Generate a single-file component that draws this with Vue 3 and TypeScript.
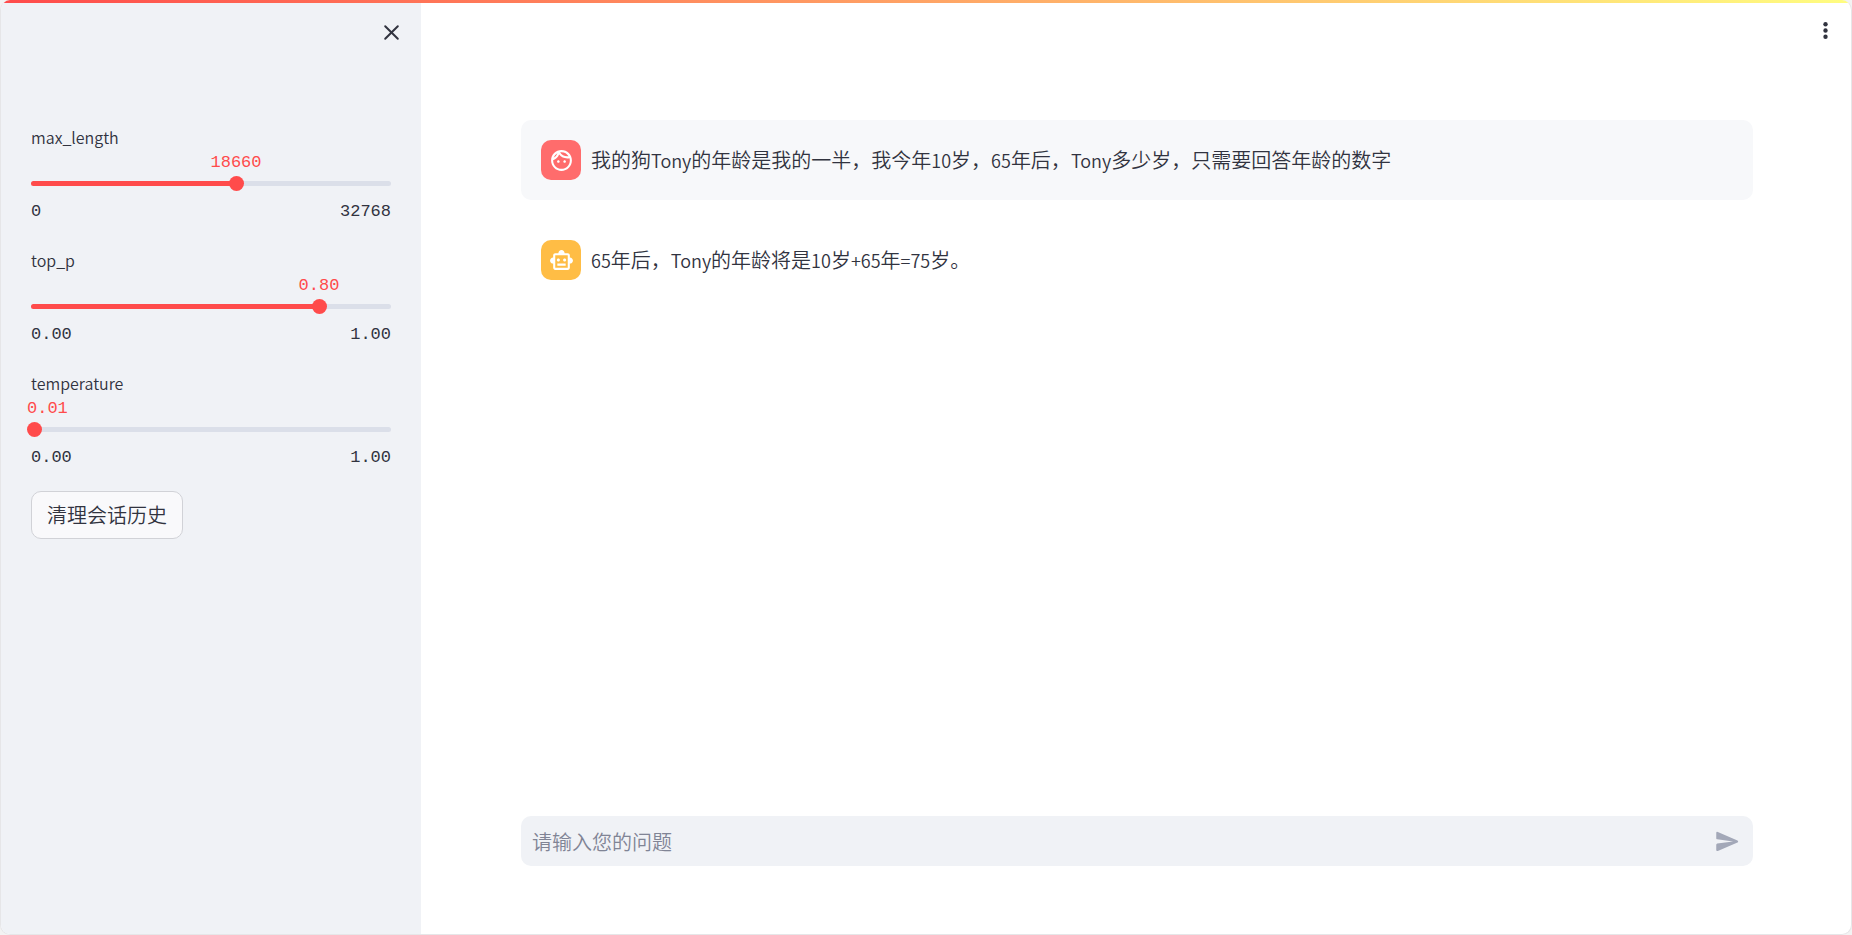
<script setup lang="ts">
import { computed, ref } from 'vue'

interface Setting {
  id: string
  min: number
  max: number
  step: number
  digits: number
  value: number
}

interface Message {
  role: 'user' | 'assistant'
  text: string
}

const settings = ref<Setting[]>([
  { id: 'max_length', min: 0, max: 32768, step: 1, digits: 0, value: 18660 },
  { id: 'top_p', min: 0, max: 1, step: 0.01, digits: 2, value: 0.8 },
  { id: 'temperature', min: 0, max: 1, step: 0.01, digits: 2, value: 0.01 },
])

const messages = ref<Message[]>([
  { role: 'user', text: '我的狗Tony的年龄是我的一半，我今年10岁，65年后，Tony多少岁，只需要回答年龄的数字' },
  { role: 'assistant', text: '65年后，Tony的年龄将是10岁+65年=75岁。' },
])

const sidebarOpen = ref(true)
const draft = ref('')

// Latin runs are set apart so they can be sized to sit evenly beside Chinese text.
const rows = computed(() =>
  messages.value.map((m) => ({
    role: m.role,
    runs: (m.text.match(/[\x20-\x7e]+|[^\x20-\x7e]+/g) ?? []).map((text) => ({
      text,
      latin: /^[\x20-\x7e]/.test(text),
    })),
  })),
)

function sliderVars(s: Setting) {
  return {
    '--pos': `${((s.value - s.min) / (s.max - s.min)) * 100}%`,
    '--chars': s.value.toFixed(s.digits).length,
  }
}

function send() {
  const text = draft.value.trim()
  if (!text) return
  messages.value.push({ role: 'user', text })
  draft.value = ''
}
</script>

<template>
  <div class="app">
    <div class="decoration"></div>

    <aside v-if="sidebarOpen" class="sidebar">
      <header class="sidebar-head">
        <button class="icon-button" type="button" aria-label="Close sidebar" @click="sidebarOpen = false">
          <svg width="25" height="25" viewBox="0 0 25 25" fill="none" stroke="currentColor" stroke-width="2" stroke-linecap="round">
            <path d="M6.2 6.2l12.6 12.6M18.8 6.2L6.2 18.8" />
          </svg>
        </button>
      </header>

      <div class="settings">
        <div v-for="s in settings" :key="s.id" class="setting" :style="sliderVars(s)">
          <label class="setting-label" :for="s.id">{{ s.id }}</label>
          <output class="setting-value" :for="s.id">{{ s.value.toFixed(s.digits) }}</output>
          <div class="slider">
            <div class="track"><div class="fill"></div></div>
            <input :id="s.id" v-model.number="s.value" class="range" type="range" :min="s.min" :max="s.max" :step="s.step" />
          </div>
          <div class="limits">
            <span>{{ s.min.toFixed(s.digits) }}</span>
            <span>{{ s.max.toFixed(s.digits) }}</span>
          </div>
        </div>
        <button class="clear" type="button" @click="messages = []">清理会话历史</button>
      </div>
    </aside>

    <main class="main">
      <header class="toolbar">
        <button class="icon-button" type="button" aria-label="Main menu">
          <svg width="25" height="25" viewBox="0 0 24 24" fill="currentColor">
            <circle cx="12" cy="6" r="2.1" />
            <circle cx="12" cy="12" r="2.1" />
            <circle cx="12" cy="18" r="2.1" />
          </svg>
        </button>
      </header>

      <section class="chat">
        <article v-for="(row, i) in rows" :key="i" class="message" :class="row.role">
          <div class="avatar">
            <svg v-if="row.role === 'user'" width="25" height="25" viewBox="0 0 24 24" fill="currentColor">
              <path d="M10.25 13c0 .69-.56 1.25-1.25 1.25S7.75 13.69 7.75 13 8.31 11.75 9 11.75s1.25.56 1.25 1.25zM15 11.75c-.69 0-1.25.56-1.25 1.25s.56 1.25 1.25 1.25 1.25-.56 1.25-1.25-.56-1.25-1.25-1.25zm7 .25c0 5.52-4.48 10-10 10S2 17.52 2 12 6.48 2 12 2s10 4.48 10 10zM10.66 4.12C12.06 6.44 14.6 8 17.5 8c.46 0 .91-.05 1.34-.12C17.44 5.56 14.9 4 12 4c-.46 0-.91.05-1.34.12zM4.42 9.47a8.046 8.046 0 003.66-4.44 8.046 8.046 0 00-3.66 4.44zM20 12c0-.78-.12-1.53-.33-2.24-.7.15-1.42.24-2.17.24a10 10 0 01-7.76-3.69A10.016 10.016 0 014 11.86c.01.04 0 .09 0 .14 0 4.42 3.58 8 8 8s8-3.58 8-8z" />
            </svg>
            <svg v-else width="25" height="25" viewBox="0 0 24 24" fill="currentColor">
              <path d="M20 9V7c0-1.1-.9-2-2-2h-3c0-1.66-1.34-3-3-3S9 3.34 9 5H6c-1.1 0-2 .9-2 2v2c-1.66 0-3 1.34-3 3s1.34 3 3 3v4c0 1.1.9 2 2 2h12c1.1 0 2-.9 2-2v-4c1.66 0 3-1.34 3-3s-1.34-3-3-3zm-2 10H6V7h12v12zm-9-6c-.83 0-1.5-.67-1.5-1.5S8.17 10 9 10s1.5.67 1.5 1.5S9.83 13 9 13zm7.5-1.5c0 .83-.67 1.5-1.5 1.5s-1.5-.67-1.5-1.5.67-1.5 1.5-1.5 1.5.67 1.5 1.5zM8 15h8v2H8v-2z" />
            </svg>
          </div>
          <p class="text"><span v-for="(run, j) in row.runs" :key="j" :class="{ latin: run.latin }">{{ run.text }}</span></p>
        </article>
      </section>

      <form class="composer" @submit.prevent="send">
        <input v-model="draft" class="composer-input" type="text" aria-label="请输入您的问题" placeholder="请输入您的问题" />
        <button class="send" type="submit" aria-label="Send">
          <svg width="27" height="27" viewBox="0 0 24 24" fill="currentColor">
            <path d="M3.4 20.4l17.45-7.48a1 1 0 000-1.84L3.4 3.6a.993.993 0 00-1.39.91L2 9.12c0 .5.37.93.87.99L17 12 2.87 13.88c-.5.07-.87.5-.87 1l.01 4.61c0 .71.73 1.2 1.39.92z" />
          </svg>
        </button>
      </form>
    </main>
  </div>
</template>

<style>
body {
  background: #f3f3f3;
}
</style>

<style scoped>
.app {
  position: relative;
  box-sizing: border-box;
  display: flex;
  min-height: 100vh;
  overflow: hidden;
  border: 1px solid #e6e6e8;
  border-top: 0;
  border-radius: 10px;
  background: #fff;
  color: #31333f;
  font-family: "Noto Sans CJK SC", "Noto Sans", sans-serif;
  font-size: 20px;
  font-weight: 350;
}

.decoration {
  position: absolute;
  top: 0;
  left: 0;
  right: 0;
  height: 3px;
  background: linear-gradient(90deg, #ff4b4b, #fffd80);
}

button,
input {
  font: inherit;
  color: inherit;
}

.icon-button,
.send {
  display: flex;
  padding: 0;
  border: 0;
  background: none;
  cursor: pointer;
}

.sidebar {
  flex: none;
  box-sizing: border-box;
  width: 420px;
  padding: 20px 30px;
  background: #f0f2f6;
}

.sidebar-head {
  display: flex;
  justify-content: flex-end;
  margin-right: -13px;
  padding-bottom: 80px;
}

.settings {
  display: flex;
  flex-direction: column;
  align-items: flex-start;
  gap: 21px;
}

.setting {
  width: 100%;
}

.setting + .setting {
  margin-top: 3px;
}

.setting-label {
  display: block;
  font-size: 16px;
  line-height: 24px;
}

.setting-value,
.limits {
  font-family: "Liberation Mono", monospace;
  font-size: 17px;
  line-height: 24px;
}

.setting-value {
  display: block;
  margin-top: 2px;
  margin-left: max(-4px, calc(var(--pos) - var(--chars) * 0.5ch));
  color: #ff4b4b;
}

.slider {
  position: relative;
  display: flex;
  align-items: center;
  height: 17px;
  margin-bottom: 8px;
}

.track {
  flex: 1;
  height: 5px;
  overflow: hidden;
  border-radius: 3px;
  background: #dbdfe9;
}

.fill {
  width: var(--pos);
  height: 100%;
  background: #ff4b4b;
}

.range {
  position: absolute;
  inset: 0 -8px;
  width: calc(100% + 16px);
  height: 17px;
  margin: 0;
  appearance: none;
  background: transparent;
}

.range::-webkit-slider-thumb {
  appearance: none;
  width: 15px;
  height: 15px;
  border-radius: 50%;
  background: #ff4b4b;
}

.limits {
  display: flex;
  justify-content: space-between;
}

.clear {
  padding: 8px 15px;
  border: 1px solid #d1d2d7;
  border-radius: 10px;
  background: #f9f9fb;
  line-height: 30px;
  cursor: pointer;
}

.main {
  flex: 1;
  display: flex;
  flex-direction: column;
  padding: 18px 98px 68px 100px;
}

.toolbar {
  display: flex;
  justify-content: flex-end;
  margin-right: -85px;
  padding-bottom: 77px;
}

.chat {
  flex: 1;
  display: flex;
  flex-direction: column;
  gap: 20px;
}

.message {
  display: flex;
  align-items: center;
  gap: 10px;
  padding: 20px;
  border-radius: 10px;
}

.user {
  background: #f7f8fa;
}

.avatar {
  display: grid;
  flex: none;
  place-items: center;
  width: 40px;
  height: 40px;
  border-radius: 10px;
  color: #fff;
}

.user .avatar {
  background: #ff6c6c;
}

.assistant .avatar {
  background: #ffbd45;
}

.text {
  margin: 0;
  line-height: 30px;
}

.latin {
  font-size: 18px;
}

.composer {
  display: flex;
  align-items: center;
  height: 50px;
  padding: 0 12px 0 11px;
  border-radius: 10px;
  background: #f0f2f6;
}

.composer-input {
  flex: 1;
  min-width: 0;
  height: 30px;
  padding: 0;
  border: 0;
  outline: 0;
  background: none;
}

.composer-input::placeholder {
  color: #808495;
  opacity: 1;
}

.send {
  color: #a3a8b8;
}
</style>
